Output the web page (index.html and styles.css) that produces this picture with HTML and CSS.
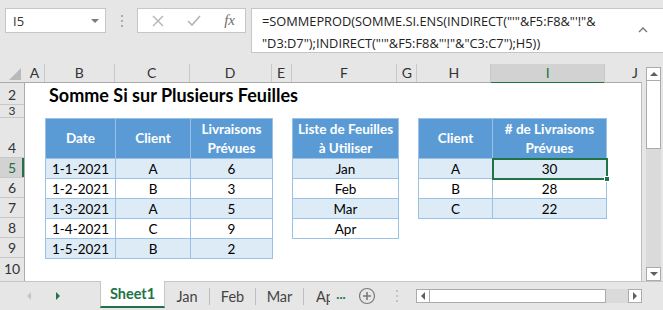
FILE: index.html
```html
<!DOCTYPE html>
<html>
	<head>
		<meta charset="UTF-8">
		<title>Somme Si sur Plusieurs Feuilles</title>
		<link rel="stylesheet" href="styles.css">
	</head>
	<body>
		<div class="fbar">
			<div class="namebox"><span>I5</span><span class="dd"></span></div>
			<div class="grip"><i></i><i></i><i></i></div>
			<div class="fbtns">
				<svg width="12" height="12" viewBox="0 0 12 12"><path d="M1 1L11 11M11 1L1 11" stroke="#b4b4b4" stroke-width="1.4" fill="none"/></svg>
				<svg width="14" height="12" viewBox="0 0 14 12"><path d="M1 6L5 10L13 1" stroke="#b4b4b4" stroke-width="1.6" fill="none"/></svg>
				<span class="fx">fx</span>
			</div>
			<div class="formula">
				<div class="ftext">=SOMMEPROD(SOMME.SI.ENS(INDIRECT("'"&amp;F5:F8&amp;"'!"&amp;<br>"D3:D7");INDIRECT("'"&amp;F5:F8&amp;"'!"&amp;"C3:C7");H5))</div>
				<div class="caret"><svg width="10" height="6" viewBox="0 0 10 6"><path d="M1 5L5 1L9 5" stroke="#777" stroke-width="1.4" fill="none"/></svg></div>
			</div>
		</div>

		<div class="grid">
			<div class="left">
				<div class="colhead">
					<div class="corner"><svg width="24" height="18" viewBox="0 0 24 18"><polygon points="21,4 21,16 9,16" fill="#b9b9b9"/></svg></div>
					<div class="c_a">A</div>
					<div class="c_b">B</div>
					<div class="c_c">C</div>
					<div class="c_d">D</div>
					<div class="c_e">E</div>
					<div class="c_f">F</div>
					<div class="c_g">G</div>
					<div class="c_h">H</div>
					<div class="c_i active_col">I</div>
					<div class="c_j">J</div>
				</div>
				<div class="sheet">
					<div class="rowhead">
						<div class="r2">2</div>
						<div class="r3">3</div>
						<div class="r4">4</div>
						<div class="r20 active_row">5</div>
						<div class="r20">6</div>
						<div class="r20">7</div>
						<div class="r20">8</div>
						<div class="r20">9</div>
						<div class="r10">10</div>
					</div>
					<div class="cells">
						<h1 class="title">Somme Si sur Plusieurs Feuilles</h1>
						<div class="tables">
							<table class="t1">
								<colgroup><col class="w70"><col class="w75"><col class="w82"></colgroup>
								<tr class="head"><td>Date</td><td>Client</td><td>Livraisons<br>Prévues</td></tr>
								<tr class="odd"><td>1-1-2021</td><td>A</td><td>6</td></tr>
								<tr><td>1-2-2021</td><td>B</td><td>3</td></tr>
								<tr class="odd"><td>1-3-2021</td><td>A</td><td>5</td></tr>
								<tr><td>1-4-2021</td><td>C</td><td>9</td></tr>
								<tr class="odd"><td>1-5-2021</td><td>B</td><td>2</td></tr>
							</table>
							<table class="t2">
								<colgroup><col class="w106"></colgroup>
								<tr class="head"><td>Liste de Feuilles<br>à Utiliser</td></tr>
								<tr class="odd"><td>Jan</td></tr>
								<tr><td>Feb</td></tr>
								<tr class="odd"><td>Mar</td></tr>
								<tr><td>Apr</td></tr>
							</table>
							<table class="t3">
								<colgroup><col class="w74"><col class="w114"></colgroup>
								<tr class="head"><td>Client</td><td># de Livraisons<br>Prévues</td></tr>
								<tr class="odd"><td>A</td><td class="sel">30<span class="handle"></span></td></tr>
								<tr><td>B</td><td>28</td></tr>
								<tr class="odd"><td>C</td><td>22</td></tr>
							</table>
						</div>
					</div>
				</div>
			</div>
			<div class="vscroll">
				<div class="sbtn"><span class="up"></span></div>
				<div class="thumb"></div>
				<div class="track"></div>
				<div class="sbtn"><span class="down"></span></div>
			</div>
		</div>

		<div class="tabbar">
			<div class="nav"><span class="prev"></span><span class="next"></span></div>
			<div class="tab active_tab">Sheet1</div>
			<div class="tab t_jan">Jan</div>
			<div class="tab t_feb">Feb</div>
			<div class="tab t_mar">Mar</div>
			<div class="tab t_apr"><span>Apr</span></div>
			<div class="more">...</div>
			<div class="add"><svg width="18" height="18" viewBox="0 0 18 18"><circle cx="9" cy="9" r="7.5" stroke="#7a7a7a" stroke-width="1.2" fill="none"/><path d="M9 5V13M5 9H13" stroke="#7a7a7a" stroke-width="1.6"/></svg></div>
			<div class="grip2"><i></i><i></i><i></i></div>
			<div class="hscroll">
				<div class="hbtn"><span class="prev dark"></span></div>
				<div class="hthumb"></div>
				<div class="htrack"></div>
				<div class="hbtn"><span class="next dark"></span></div>
			</div>
		</div>
	</body>
</html>
```

FILE: styles.css
```css
*{margin: 0; padding: 0; box-sizing: border-box;}
body{
	width: 663px;
	height: 310px;
	overflow: hidden;
	background: #e6e6e6;
	font-family: Lato, "Liberation Sans", sans-serif;
	color: #000;
}
/* formula bar */
.fbar{
	height: 64px;
	display: flex;
	align-items: flex-start;
	padding: 8px 0 0 5px;
}
.namebox{
	width: 101px;
	height: 25px;
	background: #fff;
	border: 1px solid #c6c6c6;
	display: flex;
	align-items: center;
	justify-content: space-between;
	padding: 0 6px 0 7px;
	font-family: "Open Sans", sans-serif;
	font-size: 13px;
	color: #333;
}
.dd{
	border-left: 4px solid transparent;
	border-right: 4px solid transparent;
	border-top: 4px solid #7a7a7a;
}
.grip{
	width: 31px;
	height: 25px;
	display: flex;
	flex-direction: column;
	align-items: center;
	justify-content: center;
	gap: 3px;
}
.grip i, .grip2 i{
	display: block;
	width: 2px;
	height: 2px;
	background: #ababab;
}
.fbtns{
	width: 109px;
	height: 25px;
	background: #fff;
	border: 1px solid #c6c6c6;
	display: flex;
	align-items: center;
	justify-content: space-between;
	padding: 0 10px 0 14px;
}
.fx{
	font-family: "Liberation Serif", serif;
	font-style: italic;
	font-size: 15px;
	color: #6e6e6e;
}
.formula{
	margin-left: 5px;
	flex: 1;
	height: 45px;
	background: #fff;
	border: 1px solid #c6c6c6;
	border-right: none;
	display: flex;
	padding-top: 1px;
}
.ftext{
	flex: 1;
	padding-left: 10px;
	font-family: "Open Sans", sans-serif;
	font-size: 12.8px;
	line-height: 22px;
	color: #222;
	white-space: nowrap;
}
.caret{
	width: 25px;
	padding-top: 7px;
}

/* grid */
.grid{display: flex;}
.left{width: 642px;}
.colhead{
	display: flex;
	height: 19px;
	border-bottom: 1px solid #ababab;
}
.colhead div{
	border-right: 1px solid #c8c8c8;
	text-align: center;
	font-size: 14px;
	line-height: 18px;
	color: #333;
}
.colhead .corner{width: 25px; border-right: none;}
.c_a{width: 20px;}
.c_b{width: 70px;}
.c_c{width: 75px;}
.c_d{width: 82px;}
.c_e{width: 20px;}
.c_f{width: 106px;}
.c_g{width: 20px;}
.c_h{width: 74px;}
.c_i{width: 114px;}
.colhead .c_j{width: 37px; border-right: none; text-align: right; padding-right: 4px;}
.colhead .active_col{
	background: #d2d2d2;
	border-bottom: 2px solid #217346;
	color: #217346;
	height: 20px;
}
.sheet{
	display: flex;
	height: 198px;
}
.rowhead{
	width: 25px;
	border-right: 1px solid #ababab;
	display: flex;
	flex-direction: column;
}
.rowhead div{
	border-bottom: 1px solid #c8c8c8;
	display: flex;
	align-items: flex-end;
	justify-content: center;
	font-size: 14px;
	line-height: 18px;
	color: #333;
	overflow: hidden;
}
.rowhead .r2{height: 22px;}
.rowhead .r3{height: 13px; align-items: flex-start; line-height: 12px; font-size: 12px;}
.rowhead .r4{height: 40px;}
.rowhead .r20{height: 20px;}
.rowhead .r10{flex: 1; border-bottom: none; align-items: flex-start; line-height: 21px;}
.rowhead .active_row{
	background: #d2d2d2;
	color: #217346;
	box-shadow: inset -2px 0 0 #217346;
}
.cells{
	flex: 1;
	background: #fff;
	border-right: 1px solid #bdbdbd;
	padding-left: 20px;
}
.title{
	height: 22px;
	padding-left: 4px;
	font-size: 18px;
	font-weight: bold;
	line-height: 24px;
}
.tables{
	display: flex;
	align-items: flex-start;
	gap: 19px;
	margin-top: 13px;
}
table{
	border-collapse: collapse;
	table-layout: fixed;
	font-size: 13.5px;
}
td{
	border: 1px solid #9bc2e6;
	height: 20px;
	padding: 0;
	text-align: center;
	line-height: 18px;
	white-space: nowrap;
}
.head td{
	background: #5b9bd5;
	color: #fff;
	font-weight: bold;
	font-size: 13.5px;
	height: 40px;
	line-height: 19px;
}
.odd td{background: #ddebf7;}
.w70{width: 70px;}
.w75{width: 75px;}
.w82{width: 82px;}
.w106{width: 106px;}
.w74{width: 74px;}
.w114{width: 114px;}
.sel{
	position: relative;
	outline: 2px solid #217346;
	outline-offset: -1px;
}
.handle{
	position: absolute;
	right: -4px;
	bottom: -4px;
	width: 6px;
	height: 6px;
	background: #217346;
	border: 1px solid #fff;
}

/* vertical scrollbar */
.vscroll{
	width: 21px;
	height: 217px;
	display: flex;
	flex-direction: column;
	padding: 3px 2px 0 4px;
}
.sbtn{
	height: 14px;
	background: #fff;
	border: 1px solid #ababab;
	display: flex;
	align-items: center;
	justify-content: center;
}
.up{
	border-left: 4px solid transparent;
	border-right: 4px solid transparent;
	border-bottom: 4px solid #606060;
}
.down{
	border-left: 4px solid transparent;
	border-right: 4px solid transparent;
	border-top: 4px solid #606060;
}
.thumb{
	height: 68px;
	background: #fff;
	border: 1px solid #ababab;
	border-top: none;
}
.track{
	flex: 1;
	background: #dadada;
}

/* sheet tabs */
.tabbar{
	height: 29px;
	border-top: 1px solid #c6c6c6;
	display: flex;
	align-items: stretch;
}
.nav{
	width: 100px;
	display: flex;
	align-items: center;
	padding-left: 27px;
	gap: 25px;
}
.prev{
	border-top: 4px solid transparent;
	border-bottom: 4px solid transparent;
	border-right: 4px solid #c4c4c4;
}
.next{
	border-top: 4px solid transparent;
	border-bottom: 4px solid transparent;
	border-left: 4px solid #217346;
}
.prev.dark{border-right-color: #606060;}
.next.dark{border-left-color: #606060;}
.tab{
	font-size: 14.5px;
	color: #444;
	display: flex;
	align-items: center;
	justify-content: center;
	align-self: center;
	height: 17px;
	border-right: 1px solid #bdbdbd;
}
.active_tab{
	width: 65px;
	height: auto;
	align-self: stretch;
	margin-top: -1px;
	background: #fff;
	border-left: 1px solid #c6c6c6;
	border-right: 1px solid #c6c6c6;
	border-bottom: 2px solid #217346;
	margin-bottom: 2px;
	color: #217346;
	font-weight: bold;
}
.t_jan{width: 45px;}
.t_feb{width: 46px;}
.t_mar{width: 48px;}
.t_apr{
	width: 26px;
	flex-shrink: 0;
	border-right: none;
	justify-content: flex-start;
	padding-left: 12px;
	overflow: hidden;
}
.t_apr span{
	display: block;
	width: 14px;
	overflow: hidden;
}
.more{
	width: 22px;
	display: flex;
	align-items: center;
	justify-content: center;
	color: #217346;
	font-weight: bold;
	font-size: 13px;
	padding-bottom: 4px;
}
.add{
	width: 30px;
	display: flex;
	align-items: center;
	justify-content: center;
}
.grip2{
	width: 30px;
	display: flex;
	flex-direction: column;
	align-items: center;
	justify-content: center;
	gap: 3px;
}
.grip2 i{background: #c4c4c4;}
.hscroll{
	width: 226px;
	height: 14px;
	margin-left: 4px;
	align-self: center;
	display: flex;
}
.hbtn{
	width: 14px;
	background: #fff;
	border: 1px solid #ababab;
	display: flex;
	align-items: center;
	justify-content: center;
}
.hthumb{
	width: 176px;
	background: #fff;
	border: 1px solid #ababab;
	border-left: none;
}
.htrack{
	flex: 1;
	background: #dadada;
}
```
